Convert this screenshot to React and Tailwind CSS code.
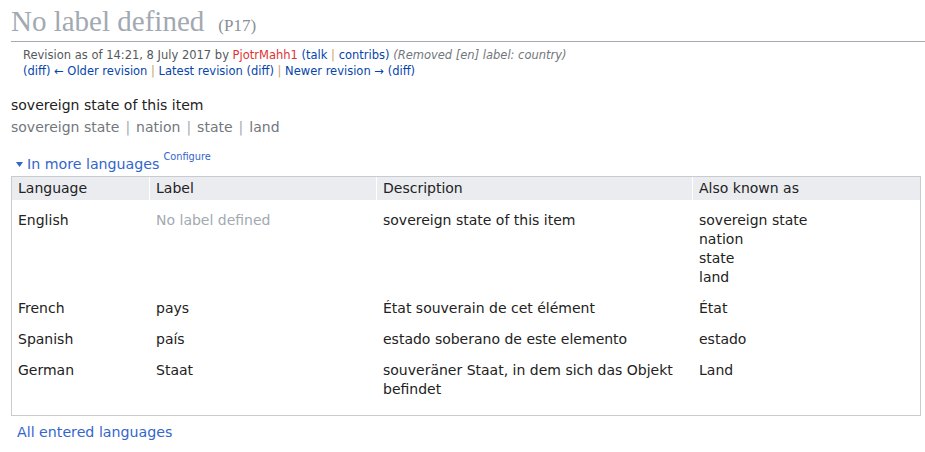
import React from 'react';

const rows = [
  { lang: 'English', label: null, desc: 'sovereign state of this item', aliases: ['sovereign state', 'nation', 'state', 'land'] },
  { lang: 'French', label: 'pays', desc: 'État souverain de cet élément', aliases: ['État'] },
  { lang: 'Spanish', label: 'país', desc: 'estado soberano de este elemento', aliases: ['estado'] },
  { lang: 'German', label: 'Staat', desc: 'souveräner Staat, in dem sich das Objekt befindet', aliases: ['Land'] },
];

const Sep = () => <span className="text-[#c9a46b]"> | </span>;

const App = () => {
  return (
    <div className="w-[925px] h-[452px] bg-white pl-[11px] text-[#222] font-['DejaVu_Sans',sans-serif] overflow-hidden">
      {/* Heading */}
      <h1 className="h-[42px] pt-[2px] text-[29px] leading-[38px] border-b border-[#a2a9b1] font-['Liberation_Serif',serif] text-[#a2a9b1]">
        <span>No label defined</span>
        <span className="text-[17px] text-[#8a8f95] ml-[14px]">(P17)</span>
      </h1>

      {/* Revision info */}
      <div className="mt-[5px] ml-[12px] text-[11.5px] leading-[16px] text-[#54595d]">
        <div>
          Revision as of 14:21, 8 July 2017 by <span className="text-[#d33]">PjotrMahh1</span>{' '}
          <span className="text-[#0645ad]">(talk<Sep />contribs)</span>{' '}
          <span className="italic text-[#72777d]">(Removed [en] label: country)</span>
        </div>
        <div className="text-[#0645ad]">
          (diff) ← Older revision<Sep />Latest revision (diff)<Sep />Newer revision → (diff)
        </div>
      </div>

      {/* Description and aliases */}
      <div className="mt-[15px] text-[14px] leading-[22px]">sovereign state of this item</div>
      <div className="text-[14px] leading-[22px] text-[#72777d]">
        sovereign state<span className="mx-[6px] text-[#a2a9b1]">|</span>nation
        <span className="mx-[6px] text-[#a2a9b1]">|</span>state
        <span className="mx-[6px] text-[#a2a9b1]">|</span>land
      </div>

      {/* In more languages */}
      <div className="mt-[15px] ml-[5px] flex items-start text-[14.2px] leading-[22px] text-[#36c]">
        <svg width="7" height="5" viewBox="0 0 7 5" className="mt-[9px] mr-[4px]">
          <path d="M0 0 H7 L3.5 5 Z" fill="#36c" />
        </svg>
        <span>In more languages</span>
        <span className="text-[9.8px] leading-[12px] ml-[4px] -mt-[2px]">Configure</span>
      </div>

      {/* Table */}
      <div className="mt-[1px] w-[910px] border border-[#c8ccd1] text-[14px]">
        <div className="grid grid-cols-[138px_227px_316px_1fr] bg-[#eaecf0] h-[23px] leading-[23px]">
          <div className="px-[6px] border-r border-white">Language</div>
          <div className="px-[6px] border-r border-white">Label</div>
          <div className="px-[6px] border-r border-white">Description</div>
          <div className="px-[6px]">Also known as</div>
        </div>
        <div className="pt-[5px] pb-[10px]">
          {rows.map((r) => (
            <div key={r.lang} className="grid grid-cols-[138px_227px_316px_1fr] py-[6px] leading-[19px]">
              <div className="px-[6px]">{r.lang}</div>
              <div className="px-[6px]">
                {r.label ? r.label : <span className="text-[#a2a9b1]">No label defined</span>}
              </div>
              <div className="px-[6px]">{r.desc}</div>
              <div className="px-[6px]">
                {r.aliases.map((a) => (
                  <div key={a}>{a}</div>
                ))}
              </div>
            </div>
          ))}
        </div>
      </div>

      <div className="mt-[7px] ml-[6px] text-[14.2px] leading-[19px] text-[#36c]">All entered languages</div>
    </div>
  );
};

export default App;
